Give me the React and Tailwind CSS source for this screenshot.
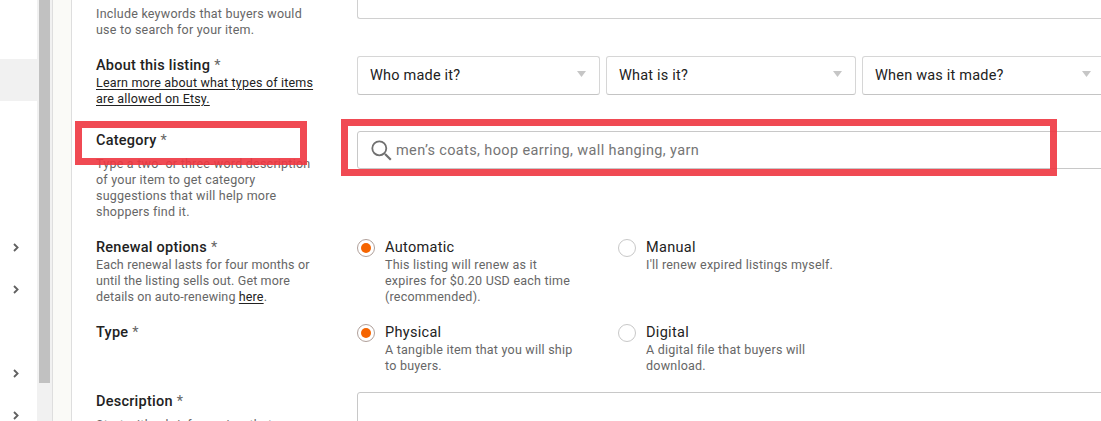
import React, { useState } from 'react';

const sidebarItems = [
  { id: 'top', height: 'h-[59px]' },
  { id: 'listings', height: 'h-[42px]', active: true },
  { id: 'messages', height: 'h-[42px]' },
  { id: 'orders', height: 'h-[42px]' },
  { id: 'stats', height: 'h-[42px]' },
  { id: 'finances', height: 'h-[42px]', arrow: true },
  { id: 'marketing', height: 'h-[42px]', arrow: true },
  { id: 'apps', height: 'h-[42px]' },
  { id: 'community', height: 'h-[42px]', arrow: true },
  { id: 'settings', height: 'h-[42px]', arrow: true },
];

function Lines({ lines, className = '', tracking = 'tracking-[0.23px]' }) {
  return (
    <p className={`text-[12.5px] leading-4 whitespace-nowrap text-[#666] ${tracking} ${className}`}>
      {lines.map((line, i) => (
        <span key={i} className="block">{line}</span>
      ))}
    </p>
  );
}

function Title({ children }) {
  return (
    <h2 className="h-5 pt-px text-[14.5px] leading-5 font-medium tracking-[0.24px] whitespace-nowrap text-[#222]">
      {children}<span className="ml-1 font-normal text-[#666]">*</span>
    </h2>
  );
}

function Row({ height, label, children }) {
  return (
    <div className={`flex shrink-0 ${height}`}>
      <div className="w-[261px] shrink-0">{label}</div>
      <div className="flex-1">{children}</div>
    </div>
  );
}

function Select({ label, width }) {
  return (
    <button className={`flex h-[39px] shrink-0 items-center justify-between rounded-[3px] border border-[#d6d6d6] border-b-[#c4c4c4] bg-white pr-[13px] pl-3 ${width}`}>
      <span className="text-[14.5px] tracking-[0.2px] whitespace-nowrap text-[#222]">{label}</span>
      <svg className="mb-1" width="9" height="6" viewBox="0 0 9 6">
        <path d="M0 0h9L4.5 6z" fill="#c6c6c6" />
      </svg>
    </button>
  );
}

function Radio({ title, lines, checked, onClick }) {
  return (
    <div className="flex w-[261px] shrink-0" onClick={onClick}>
      <span className={`mt-0.5 flex size-[18px] shrink-0 items-center justify-center rounded-full border bg-white ${checked ? 'border-[#b0a09a]' : 'border-[#c8c8c8]'}`}>
        {checked && <span className="size-[10px] rounded-full bg-[#f56400]" />}
      </span>
      <div className="ml-2.5">
        <h3 className="h-5 pt-px text-[14.5px] leading-5 tracking-[0.3px] text-[#222]">{title}</h3>
        <Lines lines={lines} />
      </div>
    </div>
  );
}

export default function App() {
  const [renewal, setRenewal] = useState('automatic');
  const [type, setType] = useState('physical');

  return (
    <div className="relative flex h-[421px] w-[1101px] overflow-hidden bg-white font-['Roboto',sans-serif]">
      {/* Sidebar */}
      <nav className="w-[37px] shrink-0">
        {sidebarItems.map((item) => (
          <div key={item.id} className={`flex items-center pl-[13px] ${item.height} ${item.active ? 'bg-[#f1f1f1]' : ''}`}>
            {item.arrow && (
              <svg className="mb-px" width="6" height="9" viewBox="0 0 6 9" fill="none" stroke="#606060" strokeWidth="1.8">
                <path d="M1 1l3.6 3.5L1 8" />
              </svg>
            )}
          </div>
        ))}
      </nav>

      {/* Scrollbar */}
      <div className="w-[15px] shrink-0 bg-[#f1f1f1] px-0.5">
        <div className="h-[383px] w-[11px] bg-[#c1c1c1]" />
      </div>
      <div className="w-5 shrink-0 border-x border-[#dedede] bg-[#fafaf7]" />

      {/* Form */}
      <main className="flex flex-1 flex-col pl-6">
        <Row
          height="h-[55px]"
          label={<Lines className="pt-1.5" lines={['Include keywords that buyers would', 'use to search for your item.']} />}
        >
          <div className="h-[19px] w-[800px] rounded-bl-[3px] border-b border-l border-[#d0d0d0]" />
        </Row>

        <Row
          height="h-[75px]"
          label={
            <>
              <Title>About this listing</Title>
              <a>
                <Lines
                  className="text-[#222]! underline underline-offset-2"
                  tracking="tracking-[0.18px]"
                  lines={['Learn more about what types of items', 'are allowed on Etsy.']}
                />
              </a>
            </>
          }
        >
          <div className="flex gap-1.5 pt-px">
            <Select label="Who made it?" width="w-[243px]" />
            <Select label="What is it?" width="w-[250px]" />
            <Select label="When was it made?" width="w-[243px]" />
          </div>
        </Row>

        <Row
          height="h-[107px]"
          label={
            <>
              <Title>Category</Title>
              <Lines
                className="pt-1.5"
                lines={['Type a two- or three-word description', 'of your item to get category', 'suggestions that will help more', 'shoppers find it.']}
              />
            </>
          }
        >
          <div className="mt-px flex h-[38px] w-[800px] items-center rounded-[3px] border border-[#c8c8c8] pl-[13px]">
            <svg width="21" height="21" viewBox="0 0 21 21" fill="none" stroke="#707070">
              <circle cx="8.3" cy="8.3" r="7" strokeWidth="1.8" />
              <path d="M14 14l5.8 5.8" strokeWidth="2.2" />
            </svg>
            <input
              className="ml-1 w-[600px] pt-0.5 text-[14.5px] tracking-[0.37px] text-[#757575] outline-none placeholder:text-[#757575]"
              placeholder="men’s coats, hoop earring, wall hanging, yarn"
            />
          </div>
        </Row>

        <Row
          height="h-[85px]"
          label={
            <>
              <Title>Renewal options</Title>
              <Lines
                tracking="tracking-[0.14px]"
                lines={[
                  'Each renewal lasts for four months or',
                  'until the listing sells out. Get more',
                  <>details on auto-renewing <a className="text-[#222] underline underline-offset-2">here</a>.</>,
                ]}
              />
            </>
          }
        >
          <div className="flex">
            <Radio
              title="Automatic"
              lines={['This listing will renew as it', 'expires for $0.20 USD each time', '(recommended).']}
              checked={renewal === 'automatic'}
              onClick={() => setRenewal('automatic')}
            />
            <Radio
              title="Manual"
              lines={["I'll renew expired listings myself."]}
              checked={renewal === 'manual'}
              onClick={() => setRenewal('manual')}
            />
          </div>
        </Row>

        <Row height="h-[69px]" label={<Title>Type</Title>}>
          <div className="flex">
            <Radio
              title="Physical"
              lines={['A tangible item that you will ship', 'to buyers.']}
              checked={type === 'physical'}
              onClick={() => setType('physical')}
            />
            <Radio
              title="Digital"
              lines={['A digital file that buyers will', 'download.']}
              checked={type === 'digital'}
              onClick={() => setType('digital')}
            />
          </div>
        </Row>

        <Row
          height="h-[80px]"
          label={
            <>
              <Title>Description</Title>
              <Lines className="pt-1.5" lines={['Start with a brief overview that']} />
            </>
          }
        >
          <div className="mt-px h-[79px] w-[800px] rounded-[3px] border border-[#c8c8c8]" />
        </Row>
      </main>

      {/* Highlight frames */}
      <div className="pointer-events-none absolute top-[121px] left-[75px] h-11 w-[232px] border-7 border-[#ee3640]/90" />
      <div className="pointer-events-none absolute top-[119px] left-[341px] h-[57px] w-[716px] border-7 border-[#ee3640]/90" />
    </div>
  );
}
